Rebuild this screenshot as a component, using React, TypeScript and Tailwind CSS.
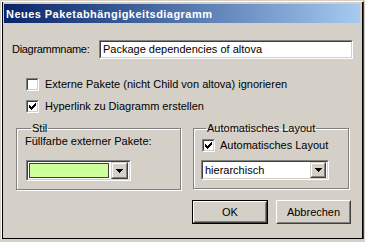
import React from "react";

function Sunken({ className = "", innerClass = "", children }: { className?: string; innerClass?: string; children?: React.ReactNode }) {
  return (
    <div className={`border-t border-l border-b border-r border-t-[#808080] border-l-[#808080] border-b-white border-r-white ${className}`}>
      <div className={`h-full border-t border-l border-b border-r border-t-[#404040] border-l-[#404040] border-b-[#d4d0c8] border-r-[#d4d0c8] ${innerClass}`}>{children}</div>
    </div>
  );
}

function Raised({ className = "", innerClass = "", children }: { className?: string; innerClass?: string; children?: React.ReactNode }) {
  return (
    <div className={`border-t border-l border-b border-r border-t-white border-l-white border-b-[#404040] border-r-[#404040] ${className}`}>
      <div className={`h-full border-t border-l border-b border-r border-t-[#d4d0c8] border-l-[#d4d0c8] border-b-[#808080] border-r-[#808080] bg-[#d4d0c8] ${innerClass}`}>{children}</div>
    </div>
  );
}

function CheckMark() {
  return (
    <svg width="7" height="7" viewBox="0 0 7 7" shapeRendering="crispEdges" className="block">
      <rect x="6" y="0" width="1" height="1" fill="#000" />
      <rect x="5" y="1" width="2" height="1" fill="#000" />
      <rect x="0" y="2" width="1" height="1" fill="#000" />
      <rect x="4" y="2" width="3" height="1" fill="#000" />
      <rect x="0" y="3" width="2" height="1" fill="#000" />
      <rect x="3" y="3" width="3" height="1" fill="#000" />
      <rect x="0" y="4" width="5" height="1" fill="#000" />
      <rect x="1" y="5" width="3" height="1" fill="#000" />
      <rect x="2" y="6" width="1" height="1" fill="#000" />
    </svg>
  );
}

function Checkbox({ checked }: { checked?: boolean }) {
  return (
    <Sunken className="w-[13px] h-[13px] shrink-0" innerClass="bg-white flex items-center justify-center">
      {checked ? <CheckMark /> : null}
    </Sunken>
  );
}

function Arrow() {
  return (
    <svg width="7" height="4" viewBox="0 0 7 4" shapeRendering="crispEdges" className="block">
      <rect x="0" y="0" width="7" height="1" fill="#000" />
      <rect x="1" y="1" width="5" height="1" fill="#000" />
      <rect x="2" y="2" width="3" height="1" fill="#000" />
      <rect x="3" y="3" width="1" height="1" fill="#000" />
    </svg>
  );
}

function DropButton({ className = "" }: { className?: string }) {
  return (
    <div className={`border-t border-l border-b border-r border-t-[#d4d0c8] border-l-[#d4d0c8] border-b-[#404040] border-r-[#404040] ${className}`}>
      <div className="h-full border-t border-l border-b border-r border-t-white border-l-white border-b-[#808080] border-r-[#808080] bg-[#d4d0c8] flex items-center justify-center">
        <Arrow />
      </div>
    </div>
  );
}

export default function App() {
  return (
    <div className="w-[365px] h-[242px] bg-[#d4d0c8] pt-[1px] pl-[1px] pr-[1px] pb-[3px] font-['Liberation_Sans',Arial,sans-serif] text-[11px] leading-[13px] text-black">
      <div className="h-full border-t border-l border-r border-t-white border-l-white border-r-[#404040]">
        <div className="h-full border-l border-r border-b border-l-black border-r-black border-b-black pt-[2px] pl-[1px] pr-[2px] flex flex-col">
          <div className="h-[19px] bg-gradient-to-r from-[#0a246a] to-[#a6caf0] pl-[2px] flex items-end pb-[2px]">
            <span className="text-white font-bold text-[11px] tracking-[0.45px] leading-[13px]">Neues Paketabhängigkeitsdiagramm</span>
          </div>
          <div className="flex flex-col pl-[8px]">
            <div className="flex items-center mt-[17px]">
              <span className="w-[87px] tracking-[-0.3px]">Diagrammname:</span>
              <Sunken className="w-[254px] h-[19px]" innerClass="bg-white flex items-center pl-[2px]">
                <span>Package dependencies of altova</span>
              </Sunken>
            </div>
            <div className="flex items-center mt-[19px] ml-[14px] gap-[6px]">
              <Checkbox />
              <span>Externe Pakete (nicht Child von altova) ignorieren</span>
            </div>
            <div className="flex items-center mt-[9px] ml-[14px] gap-[6px]">
              <Checkbox checked />
              <span>Hyperlink zu Diagramm erstellen</span>
            </div>
            <div className="flex mt-[9px] ml-[4px] gap-[12px]">
              <fieldset className="w-[165px] h-[68px] border border-[#808080] shadow-[inset_1px_1px_0_#fff,1px_1px_0_#fff] pl-[7px]">
                <legend className="ml-[7px] px-[1px] leading-[13px]">Stil</legend>
                <div className="pl-[1px]">Füllfarbe externer Pakete:</div>
                <Sunken className="w-[105px] h-[21px] mt-[12px] ml-[2px]" innerClass="bg-white flex items-center pl-[1px] pr-[1px] gap-[2px]">
                  <div className="w-[82px] h-[15px] border border-[#404040] bg-[#ccff99]" />
                  <DropButton className="w-[17px] h-[17px]" />
                </Sunken>
              </fieldset>
              <fieldset className="w-[156px] h-[67px] border border-[#808080] shadow-[inset_1px_1px_0_#fff,1px_1px_0_#fff] pl-[7px]">
                <legend className="ml-[5px] px-[1px] leading-[13px]">Automatisches Layout</legend>
                <div className="flex items-center gap-[5px] mt-[4px] ml-[1px]">
                  <Checkbox checked />
                  <span>Automatisches Layout</span>
                </div>
                <Sunken className="w-[128px] h-[20px] mt-[8px]" innerClass="bg-white flex items-center pl-[2px] pr-[1px] justify-between">
                  <span>hierarchisch</span>
                  <DropButton className="w-[16px] h-[16px]" />
                </Sunken>
              </fieldset>
            </div>
            <div className="flex mt-[10px] ml-[180px] gap-[8px]">
              <div className="w-[76px] h-[24px] border border-black">
                <Raised className="h-full" innerClass="flex items-center justify-center">OK</Raised>
              </div>
              <Raised className="w-[75px] h-[24px]" innerClass="flex items-center justify-center">Abbrechen</Raised>
            </div>
          </div>
        </div>
      </div>
    </div>
  );
}
